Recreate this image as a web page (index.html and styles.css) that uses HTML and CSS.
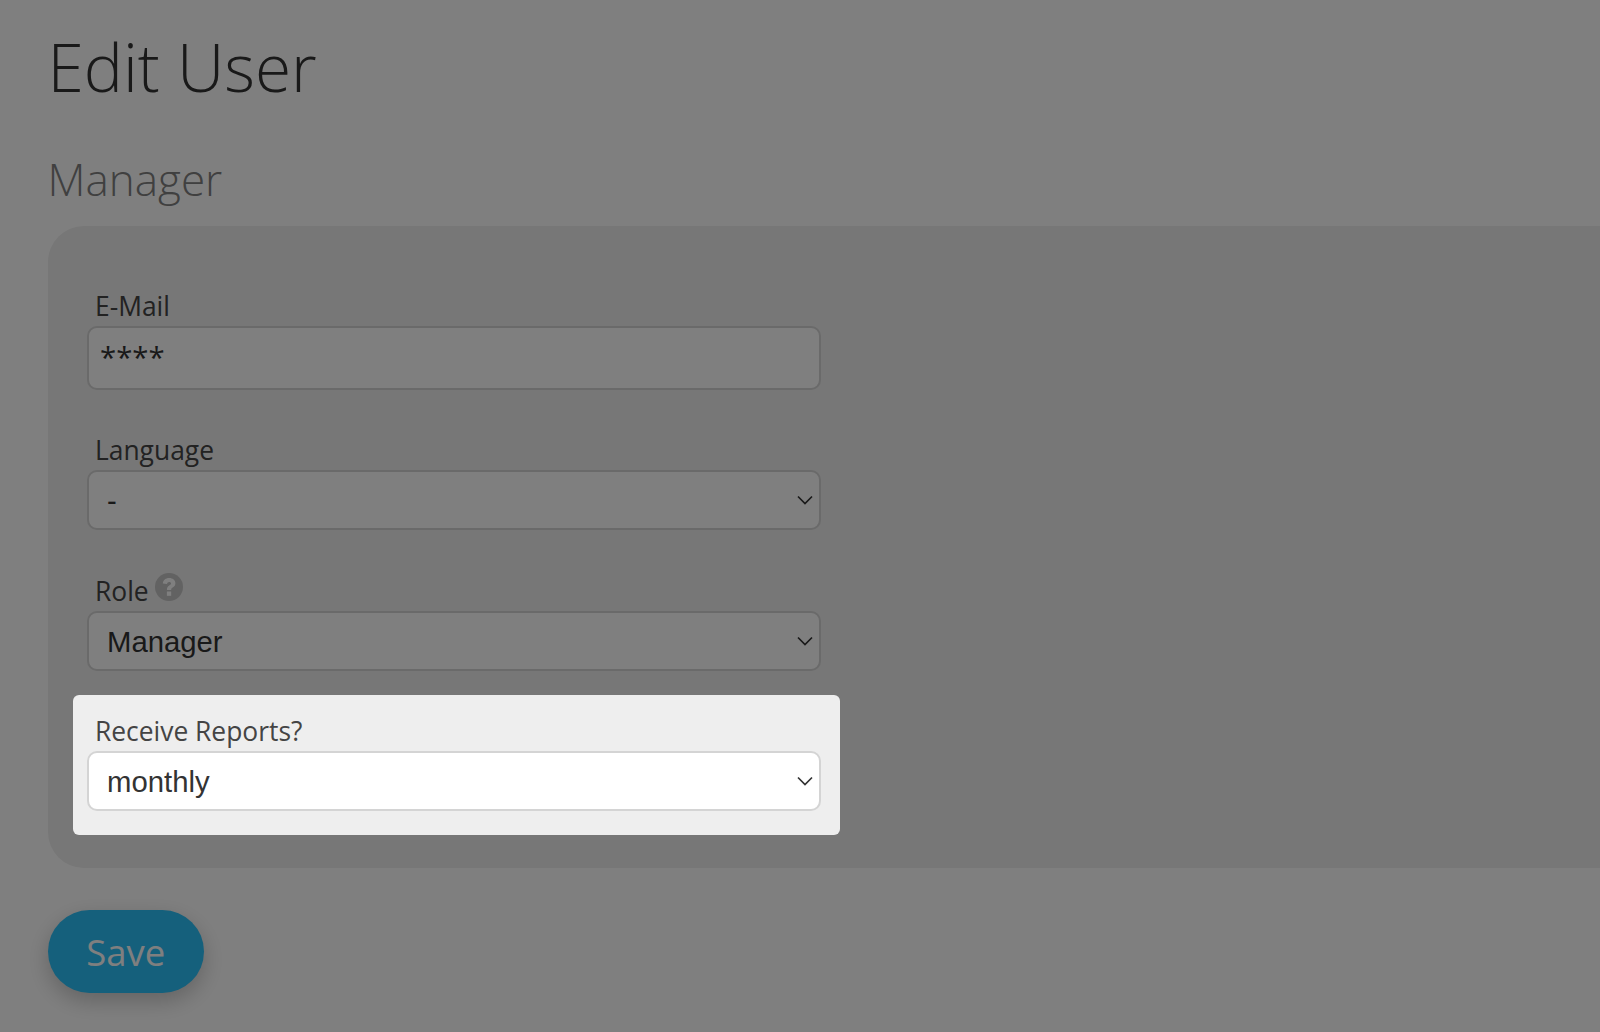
FILE: index.html
```html
<!DOCTYPE html>
<html lang="en">
<head>
<meta charset="utf-8">
<title>Edit User</title>
<link rel="stylesheet" href="styles.css">
</head>
<body>
<div class="overlay"></div>
<main class="page">
  <h1 class="title">Edit User</h1>
  <h2 class="subtitle">Manager</h2>
  <form class="panel">
    <div class="field field-email">
      <label class="label" for="email">E-Mail</label>
      <input class="control control-input" id="email" value="****">
    </div>
    <div class="field field-language">
      <label class="label" for="language">Language</label>
      <div class="select-wrap">
        <select class="control control-select" id="language"><option>-</option></select>
        <svg class="chevron" viewBox="0 0 16 10"><path d="M1 1.5 8 8.5 15 1.5"/></svg>
      </div>
    </div>
    <div class="field field-role">
      <label class="label" for="role">Role<svg class="help" viewBox="0 0 28 28"><circle cx="14" cy="14" r="14"/><path class="help-mark" d="M7.800 10.600C8.100 7.100 10.700 5 14.200 5c3.500 0 6.200 2.100 6.200 5.200 0 2.300-1.300 3.400-2.700 4.300-1.200.8-1.500 1.200-1.500 2.500h-4.300c0-2.500.8-3.600 2.300-4.600 1-.7 1.900-1.100 1.900-2 0-.9-.8-1.500-1.900-1.500-1.200 0-2 .7-2.200 2z"/><rect class="help-mark" x="11.900" y="18.500" width="4.300" height="4.300"/></svg></label>
      <div class="select-wrap">
        <select class="control control-select" id="role"><option>Manager</option></select>
        <svg class="chevron" viewBox="0 0 16 10"><path d="M1 1.5 8 8.5 15 1.5"/></svg>
      </div>
    </div>
    <div class="field highlight">
      <label class="label" for="reports">Receive Reports?</label>
      <div class="select-wrap">
        <select class="control control-select" id="reports"><option>monthly</option></select>
        <svg class="chevron" viewBox="0 0 16 10"><path d="M1 1.5 8 8.5 15 1.5"/></svg>
      </div>
    </div>
  </form>
  <button class="save" type="button">Save</button>
</main>
</body>
</html>
```

FILE: styles.css
```css
html, body {
  margin: 0;
  height: 100%;
  overflow: hidden;
  background: #fff;
}

body {
  font-family: "Open Sans", sans-serif;
  color: #333;
}

.overlay {
  position: fixed;
  inset: 0;
  background: rgba(0, 0, 0, 0.5);
  z-index: 10;
}

.page {
  padding: 0 0 0 47.5px;
}

.title {
  margin: 0;
  padding-top: 22px;
  font-size: 65.8px;
  line-height: 90px;
  font-weight: 300;
  color: #333;
}

.subtitle {
  margin: 0;
  padding-top: 37px;
  height: 77px;
  font-size: 44px;
  line-height: 60px;
  font-weight: 300;
  color: #808080;
}

.panel {
  margin-right: -60px;
  padding: 64px 0 32px 25.5px;
  background: #eee;
  border-radius: 36px;
  height: 546px;
}

.field {
  width: 767px;
  box-sizing: border-box;
  padding: 0 20px 0 14px;
}

.field-language {
  margin-top: 44px;
}

.field-role {
  margin-top: 45px;
}

.highlight {
  position: relative;
  z-index: 20;
  margin-top: 24px;
  height: 140px;
  padding-top: 20px;
  background: #eee;
  border-radius: 6px;
}

.label {
  display: flex;
  align-items: flex-start;
  height: 36px;
  padding-left: 8px;
  font-size: 26.4px;
  line-height: 33px;
  color: #444;
}

.help {
  flex: none;
  width: 28px;
  height: 28px;
  margin: -2px 0 0 6px;
  fill: #c4c4c4;
}

.help-mark {
  fill: #fff;
}

.select-wrap {
  position: relative;
}

.control {
  display: block;
  width: 734px;
  height: 60px;
  box-sizing: border-box;
  border: 2px solid #d4d4d4;
  border-radius: 10px;
  background: #fff;
  color: #333;
  font-family: "Liberation Sans", Arial, sans-serif;
  font-size: 29.3px;
  outline: none;
}

.control-input {
  height: 64px;
  padding: 0 11px 3px;
  font-family: "Open Sans", sans-serif;
}

.control-select {
  appearance: none;
  padding: 0 18px;
}

.chevron {
  position: absolute;
  top: 25px;
  right: 7px;
  width: 16px;
  height: 10px;
  fill: none;
  stroke: #333;
  stroke-width: 1.7;
}

.save {
  display: block;
  margin-top: 42px;
  width: 156.5px;
  height: 83px;
  border: 0;
  border-radius: 42px;
  background: #2bc0f8;
  color: #fff;
  font-family: "Open Sans", sans-serif;
  font-size: 36.5px;
  box-shadow: 0 8px 22px rgba(0, 0, 0, 0.22);
}
```
